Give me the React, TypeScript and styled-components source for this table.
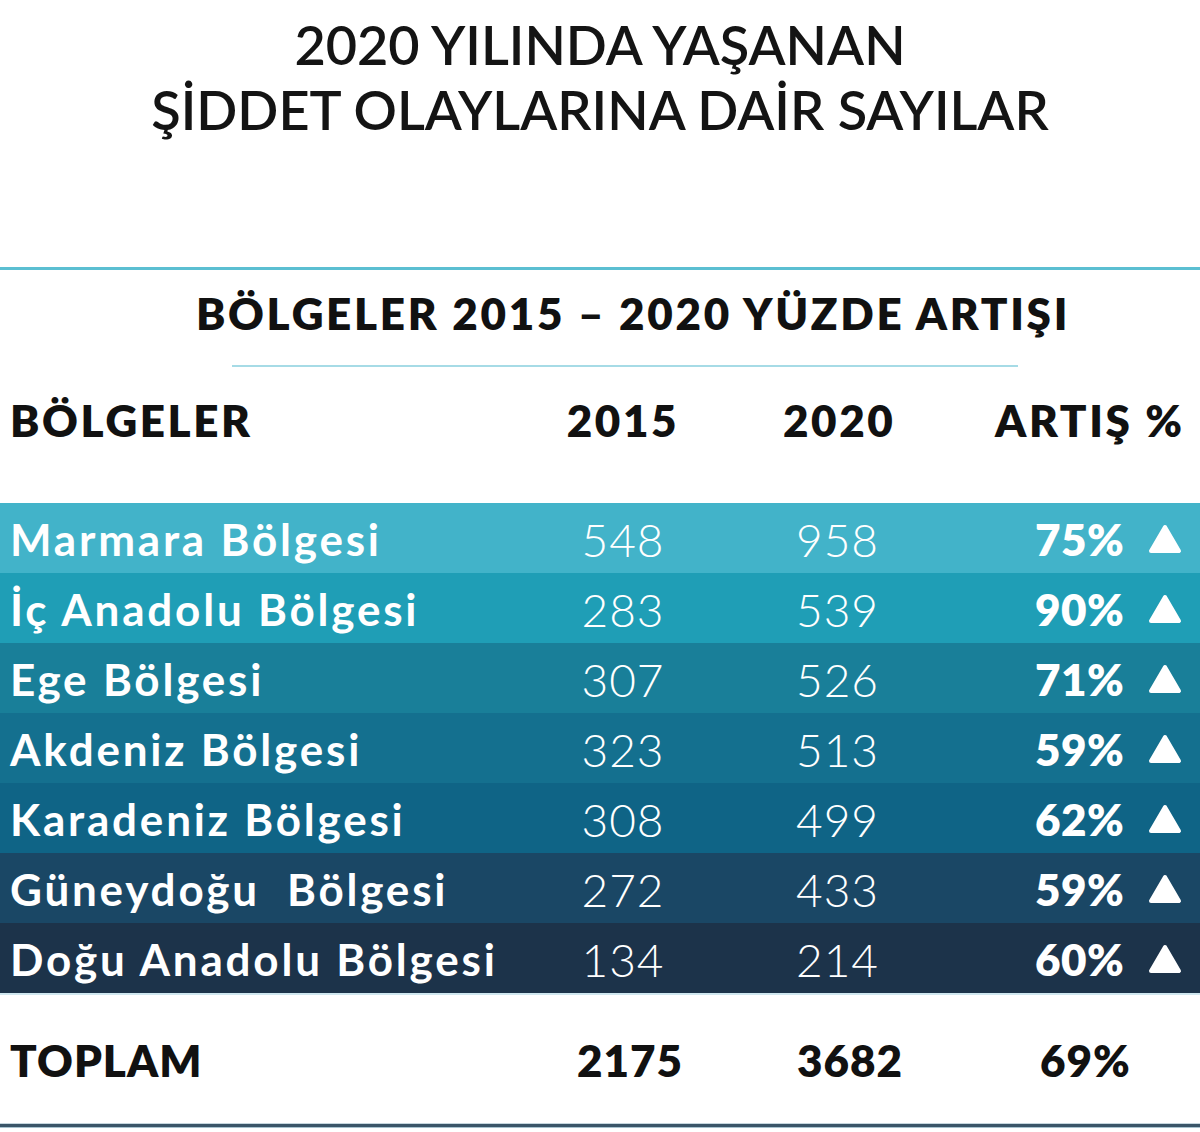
import React from "react";
import styled, { createGlobalStyle } from "styled-components";

const GlobalStyle = createGlobalStyle`
  html, body { margin: 0; padding: 0; background: #ffffff; }
  body { font-family: Lato, "Open Sans", "DejaVu Sans", sans-serif; }
`;

const Page = styled.div`
  width: 1200px;
  height: 1132px;
  overflow: hidden;
  display: flex;
  flex-direction: column;
  background: #ffffff;
  color: #111111;
`;

const Title = styled.h1`
  margin: 0;
  padding-top: 12px;
  font-size: 54px;
  line-height: 65px;
  font-weight: 600;
  text-align: center;
  color: #141414;
  letter-spacing: 0px;
`;

const TopRule = styled.div`
  margin-top: 125px;
  height: 3px;
  background: #5bbfd2;
`;

const Subtitle = styled.h2`
  margin: 13px 0 0 0;
  padding-left: 66px;
  font-size: 44px;
  line-height: 60px;
  font-weight: 800;
  text-align: center;
  letter-spacing: 2.7px;
  color: #111111;
`;

const ThinRule = styled.div`
  margin: 22px 0 0 232px;
  width: 786px;
  height: 2px;
  background: #a6dbe6;
`;

const Grid = styled.div`
  display: grid;
  grid-template-columns: 560px 126px 349px 165px;
  align-items: center;
`;

const HeaderRow = styled(Grid)`
  margin-top: 23px;
  height: 60px;
  font-size: 44px;
  font-weight: 800;
  letter-spacing: 2.6px;
  color: #111111;
`;

const HeadCell = styled.div<{ $pad?: number; $center?: boolean }>`
  padding-left: ${(p) => p.$pad ?? 0}px;
  text-align: ${(p) => (p.$center ? "center" : "left")};
  white-space: nowrap;
`;

const Rows = styled.div`
  margin-top: 53px;
  display: flex;
  flex-direction: column;
  border-bottom: 2px solid #cfe7ef;
`;

const Row = styled(Grid)<{ $bg: string }>`
  height: 70px;
  background: ${(p) => p.$bg};
  color: #ffffff;
`;

const Name = styled.div`
  padding-left: 10px;
  padding-top: 2px;
  font-size: 44px;
  font-weight: 700;
  letter-spacing: 2.8px;
  white-space: pre;
`;

const Num = styled.div<{ $pad?: number; $center?: boolean }>`
  padding-left: ${(p) => p.$pad ?? 0}px;
  padding-top: 2px;
  text-align: ${(p) => (p.$center ? "center" : "left")};
  font-size: 46px;
  font-weight: 300;
  letter-spacing: 1px;
`;

const PctCell = styled.div`
  display: flex;
  align-items: center;
  justify-content: space-between;
  padding-right: 18px;
  padding-top: 2px;
`;

const Pct = styled.span`
  font-size: 44px;
  font-weight: 800;
  letter-spacing: 0.5px;
`;

const Triangle = styled.svg`
  width: 34px;
  height: 30px;
  display: block;
`;

const TotalRow = styled(Grid)`
  height: 129px;
  font-size: 44px;
  font-weight: 800;
  color: #111111;
  letter-spacing: 1px;
`;

const TotalCell = styled.div<{ $pad?: number; $center?: boolean }>`
  padding-left: ${(p) => p.$pad ?? 0}px;
  text-align: ${(p) => (p.$center ? "center" : "left")};
`;

const BottomRule = styled.div`
  height: 3px;
  background: #3a5568;
  box-shadow: 0 1px 0 #a9c3cf, 0 -1px 0 #c5d6de;
`;

const data = [
  { name: "Marmara Bölgesi", a: "548", b: "958", p: "75%", bg: "#42b3c9" },
  { name: "İç Anadolu Bölgesi", a: "283", b: "539", p: "90%", bg: "#1f9eb6" },
  { name: "Ege Bölgesi", a: "307", b: "526", p: "71%", bg: "#197f99" },
  { name: "Akdeniz Bölgesi", a: "323", b: "513", p: "59%", bg: "#14708f" },
  { name: "Karadeniz Bölgesi", a: "308", b: "499", p: "62%", bg: "#0f6486" },
  { name: "Güneydoğu  Bölgesi", a: "272", b: "433", p: "59%", bg: "#1a4765" },
  { name: "Doğu Anadolu Bölgesi", a: "134", b: "214", p: "60%", bg: "#1c334a" },
];

const Up = () => (
  <Triangle viewBox="0 0 34 30">
    <path
      d="M17 3 L31 27 L3 27 Z"
      fill="#ffffff"
      stroke="#ffffff"
      strokeWidth="4"
      strokeLinejoin="round"
    />
  </Triangle>
);

export default function App() {
  return (
    <Page>
      <GlobalStyle />
      <Title>
        2020 YILINDA YAŞANAN
        <br />
        ŞİDDET OLAYLARINA DAİR SAYILAR
      </Title>
      <TopRule />
      <Subtitle>BÖLGELER 2015 – 2020 YÜZDE ARTIŞI</Subtitle>
      <ThinRule />
      <HeaderRow>
        <HeadCell $pad={10}>BÖLGELER</HeadCell>
        <HeadCell $center>2015</HeadCell>
        <HeadCell $pad={97}>2020</HeadCell>
        <HeadCell style={{ marginLeft: -40 }}>ARTIŞ %</HeadCell>
      </HeaderRow>
      <Rows>
        {data.map((r) => (
          <Row key={r.name} $bg={r.bg}>
            <Name>{r.name}</Name>
            <Num $center>{r.a}</Num>
            <Num $pad={110}>{r.b}</Num>
            <PctCell>
              <Pct>{r.p}</Pct>
              <Up />
            </PctCell>
          </Row>
        ))}
      </Rows>
      <TotalRow>
        <TotalCell $pad={10}>TOPLAM</TotalCell>
        <TotalCell $pad={14} $center>2175</TotalCell>
        <TotalCell $pad={111}>3682</TotalCell>
        <TotalCell $pad={5}>69%</TotalCell>
      </TotalRow>
      <BottomRule />
    </Page>
  );
}
